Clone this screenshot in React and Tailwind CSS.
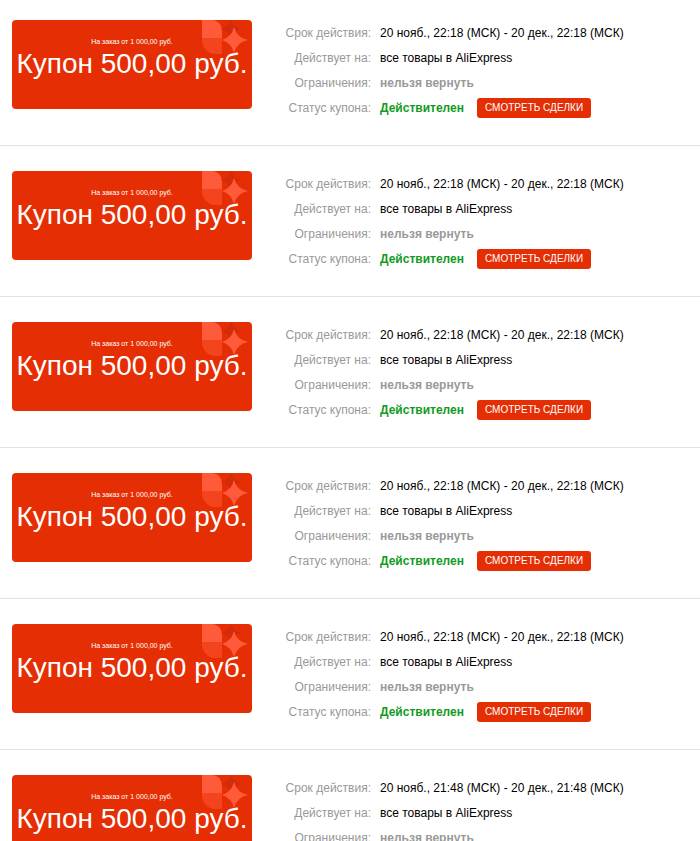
import React from 'react';

const coupons = [
  { from: '20 нояб., 22:18 (МСК)', to: '20 дек., 22:18 (МСК)' },
  { from: '20 нояб., 22:18 (МСК)', to: '20 дек., 22:18 (МСК)' },
  { from: '20 нояб., 22:18 (МСК)', to: '20 дек., 22:18 (МСК)' },
  { from: '20 нояб., 22:18 (МСК)', to: '20 дек., 22:18 (МСК)' },
  { from: '20 нояб., 22:18 (МСК)', to: '20 дек., 22:18 (МСК)' },
  { from: '20 нояб., 21:48 (МСК)', to: '20 дек., 21:48 (МСК)' },
];

function Decor() {
  return (
    <svg className="absolute left-[190px] top-0" width="50" height="40" viewBox="0 0 50 40">
      <path d="M0 0 H10 A10 10 0 0 1 20 10 V18 H0 Z" fill="#ff5b3b" />
      <path d="M0 18 H20 V34 H14 A14 14 0 0 1 0 22 Z" fill="#f3441e" />
      <path d="M29 -1 A14 14 0 0 0 39 9 A14 14 0 0 0 29 19 A14 14 0 0 0 19 9 A14 14 0 0 0 29 -1 Z" fill="#d32c0a" />
      <path d="M32 7 A18 18 0 0 0 46 20 A18 18 0 0 0 32 33 A18 18 0 0 0 20 20 A18 18 0 0 0 32 7 Z" fill="#ff5a3a" />
    </svg>
  );
}

function Row({ label, children }) {
  return (
    <div className="flex items-center h-[25px]">
      <div className="w-[99px] text-right text-[#999] mr-[9px]">{label}</div>
      {children}
    </div>
  );
}

export default function App() {
  return (
    <div className="bg-white min-h-[841px] text-[12px] font-['Liberation_Sans',Arial,sans-serif]">
      {coupons.map((c, i) => (
        <div key={i} className="flex pt-[25px] first:pt-5 pb-[25px] border-b border-[#e3e3e3] pl-3">
          <div className="relative w-[240px] h-[89px] bg-[#e62e04] rounded-[4px] overflow-hidden flex flex-col items-center pt-[17px] text-white">
            <Decor />
            <div className="relative text-[7px] leading-[9px]">На заказ от 1 000,00 руб.</div>
            <div className="relative text-[28px] leading-[32px] mt-[2px] whitespace-nowrap">Купон 500,00 руб.</div>
          </div>
          <div className="ml-5 flex flex-col">
            <Row label="Срок действия:">
              <span className="text-black">{c.from} - {c.to}</span>
            </Row>
            <Row label="Действует на:">
              <span className="text-black">все товары в AliExpress</span>
            </Row>
            <Row label="Ограничения:">
              <span className="text-[#999] font-bold">нельзя вернуть</span>
            </Row>
            <Row label="Статус купона:">
              <span className="text-[#139a1f] font-bold">Действителен</span>
              <button className="ml-[13px] h-5 px-2 bg-[#e62e04] text-white text-[10px] rounded-[3px] leading-5">
                СМОТРЕТЬ СДЕЛКИ
              </button>
            </Row>
          </div>
        </div>
      ))}
    </div>
  );
}
